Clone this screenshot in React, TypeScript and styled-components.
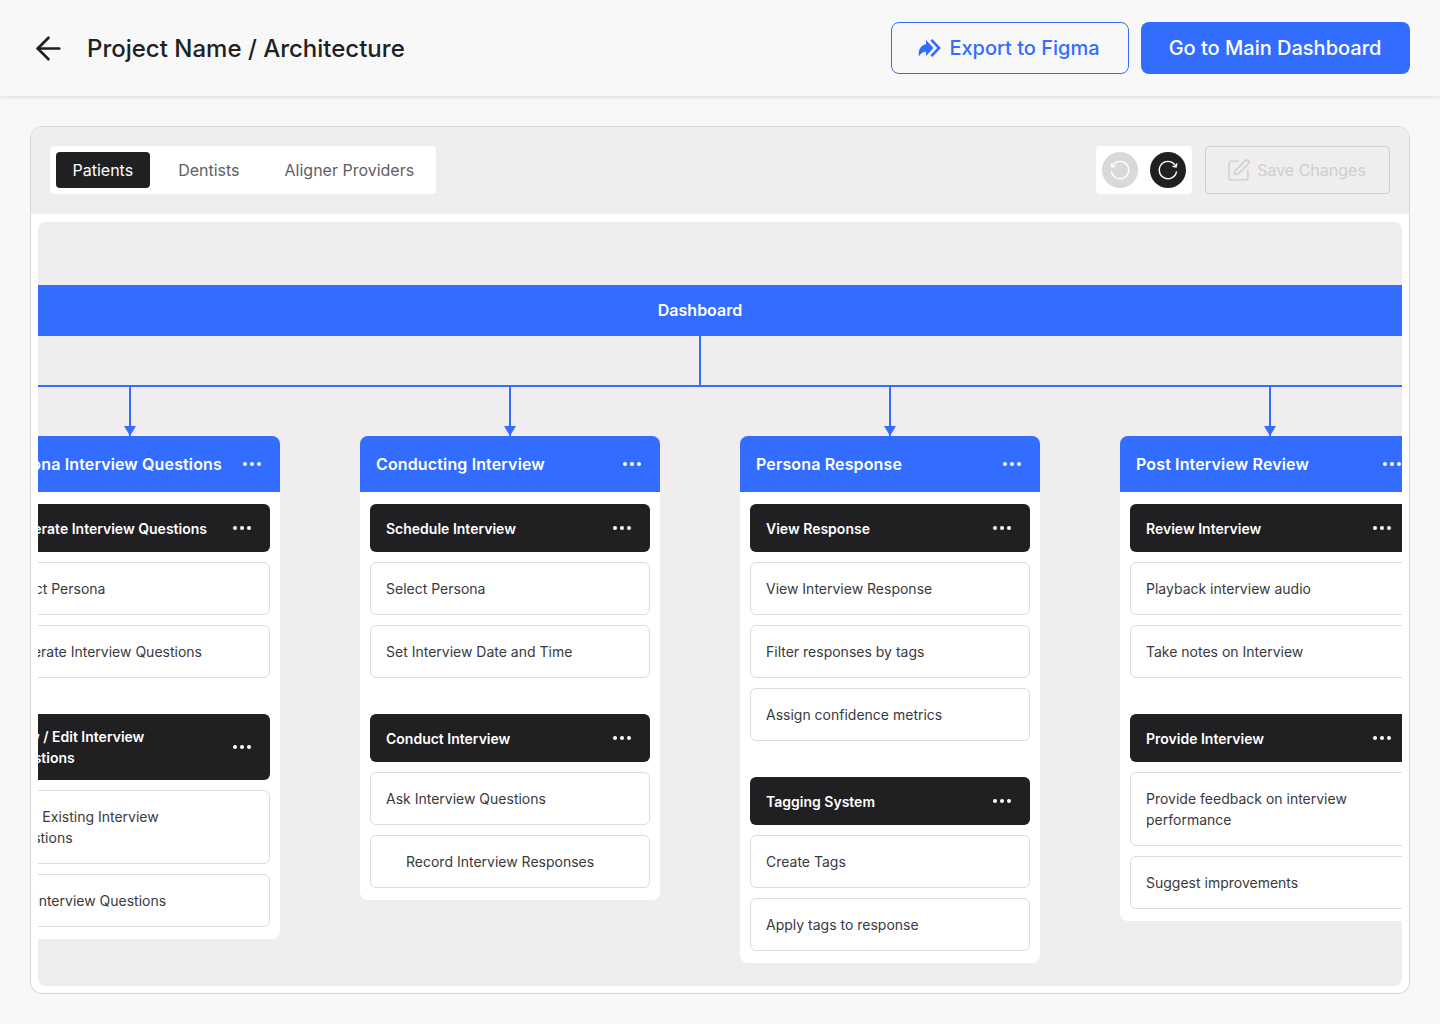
import React from "react";
import styled, { createGlobalStyle } from "styled-components";
import { ArrowLeft, SquarePen } from "lucide-react";

const BLUE = "#336dff";
const INK = "#201f22";
const WASH = "#efedee";

type Section = {
  title: string;
  items: string[];
};

type Module = {
  title: string;
  sections: Section[];
};

const modules: Module[] = [
  {
    title: "Persona Interview Questions",
    sections: [
      {
        title: "Generate Interview Questions",
        items: ["Select Persona", "Generate Interview Questions"],
      },
      {
        title: "View / Edit Interview Questions",
        items: ["View Existing Interview Questions", "Edit Interview Questions"],
      },
    ],
  },
  {
    title: "Conducting Interview",
    sections: [
      {
        title: "Schedule Interview",
        items: ["Select Persona", "Set Interview Date and Time"],
      },
      {
        title: "Conduct Interview",
        items: ["Ask Interview Questions", "Record Interview Responses"],
      },
    ],
  },
  {
    title: "Persona Response",
    sections: [
      {
        title: "View Response",
        items: ["View Interview Response", "Filter responses by tags", "Assign confidence metrics"],
      },
      {
        title: "Tagging System",
        items: ["Create Tags", "Apply tags to response"],
      },
    ],
  },
  {
    title: "Post Interview Review",
    sections: [
      {
        title: "Review Interview",
        items: ["Playback interview audio", "Take notes on Interview"],
      },
      {
        title: "Provide Interview",
        items: ["Provide feedback on interview performance", "Suggest improvements"],
      },
    ],
  },
];

const FigmaExportIcon = () => (
  <svg width="23" height="18" viewBox="0 0 23 18" fill="none">
    <path
      d="M8 .9 15.6 9 8 17v-4.2C4.8 12.8 2.6 14.4.9 17.6-.1 11 2.8 6 8 5.2z"
      fill={BLUE}
    />
    <path d="M13.4.9 21 9l-7.6 8.1" stroke={BLUE} strokeWidth="2.6" />
  </svg>
);

const DotsIcon = () => (
  <svg width="24" height="24" viewBox="0 0 24 24" fill="currentColor">
    <circle cx="5" cy="12" r="2" />
    <circle cx="12" cy="12" r="2" />
    <circle cx="19" cy="12" r="2" />
  </svg>
);

const HistoryIcon: React.FC<{ $undo?: boolean }> = ({ $undo }) => (
  <HistorySvg $undo={$undo} width="26" height="26" viewBox="0 0 24 24" fill="none" stroke="currentColor" strokeWidth="1.3">
    <path d="M19.9 13.3A8 8 0 1 1 19.4 9" />
    <path d="M20.2 5.9 19.5 9.2 16.2 8.5" />
  </HistorySvg>
);

const App: React.FC = () => {
  return (
    <Page>
      <GlobalStyle />
      <Header>
        <TitleGroup>
          <ArrowLeft size={37} color={INK} strokeWidth={1.7} />
          <PageTitle>Project Name / Architecture</PageTitle>
        </TitleGroup>
        <HeaderActions>
          <ExportButton>
            <FigmaExportIcon />
            Export to Figma
          </ExportButton>
          <PrimaryButton>Go to Main Dashboard</PrimaryButton>
        </HeaderActions>
      </Header>

      <Main>
        <Panel>
          <Toolbar>
            <Tabs>
              <Tab $active>Patients</Tab>
              <Tab>Dentists</Tab>
              <Tab>Aligner Providers</Tab>
            </Tabs>
            <ToolbarActions>
              <HistoryBox>
                <HistoryButton>
                  <HistoryIcon $undo />
                </HistoryButton>
                <HistoryButton $active>
                  <HistoryIcon />
                </HistoryButton>
              </HistoryBox>
              <SaveButton>
                <SquarePen size={25} strokeWidth={1.4} />
                Save Changes
              </SaveButton>
            </ToolbarActions>
          </Toolbar>

          <PanelBody>
            <Canvas>
              <Tree>
                <RootNode>Dashboard</RootNode>
                <RootStem />
                <Rail />
                <Columns>
                  {modules.map((module) => (
                    <Column key={module.title}>
                      <Arrow>
                        <ArrowHead />
                      </Arrow>
                      <Card>
                        <CardHeader>
                          <CardTitle>{module.title}</CardTitle>
                          <DotsIcon />
                        </CardHeader>
                        <CardBody>
                          {module.sections.map((section) => (
                            <SectionBlock key={section.title}>
                              <SectionHeader>
                                <SectionTitle>{section.title}</SectionTitle>
                                <DotsIcon />
                              </SectionHeader>
                              {section.items.map((item) => (
                                <Item key={item} $indent={item === "Record Interview Responses"}>
                                  <ItemLabel>{item}</ItemLabel>
                                </Item>
                              ))}
                            </SectionBlock>
                          ))}
                        </CardBody>
                      </Card>
                    </Column>
                  ))}
                </Columns>
              </Tree>
            </Canvas>
          </PanelBody>
        </Panel>
      </Main>
    </Page>
  );
};

export default App;

const GlobalStyle = createGlobalStyle`
  * {
    box-sizing: border-box;
  }

  body {
    margin: 0;
    background: #f8f8f8;
    font-family: Inter, "Liberation Sans", sans-serif;
  }
`;

const Page = styled.div`
  width: 1440px;
  height: 1024px;
  overflow: hidden;
  background: #f8f8f8;
`;

const Header = styled.header`
  height: 96px;
  padding: 0 30px 0 30px;
  display: flex;
  align-items: center;
  justify-content: space-between;
  background: #f8f8f8;
  box-shadow: 0 1px 4px rgba(0, 0, 0, 0.12);
`;

const TitleGroup = styled.div`
  display: flex;
  align-items: center;
  gap: 20px;
`;

const PageTitle = styled.h1`
  margin: 0;
  padding-top: 1px;
  font-size: 24px;
  line-height: 32px;
  font-weight: 500;
  color: ${INK};
`;

const HeaderActions = styled.div`
  display: flex;
  gap: 12px;
`;

const ExportButton = styled.button`
  width: 238px;
  height: 52px;
  padding: 0 2px 0 0;
  display: flex;
  align-items: center;
  justify-content: center;
  gap: 8px;
  border: 1px solid ${BLUE};
  border-radius: 8px;
  background: transparent;
  color: ${BLUE};
  font-family: inherit;
  font-size: 20px;
  font-weight: 500;
`;

const PrimaryButton = styled.button`
  width: 269px;
  height: 52px;
  padding: 0 1px 0 0;
  border: 0;
  border-radius: 8px;
  background: ${BLUE};
  color: #ffffff;
  font-family: inherit;
  font-size: 20px;
  font-weight: 500;
`;

const Main = styled.main`
  padding: 30px 30px 0;
`;

const Panel = styled.section`
  height: 868px;
  border: 1px solid #d6d6d6;
  border-radius: 12px;
  overflow: hidden;
  background: #ffffff;
`;

const Toolbar = styled.div`
  height: 87px;
  padding: 19px 19px 0;
  display: flex;
  align-items: flex-start;
  justify-content: space-between;
  background: ${WASH};
`;

const Tabs = styled.div`
  height: 48px;
  padding: 6px 5px 6px 6px;
  display: flex;
  gap: 12px;
  border-radius: 4px;
  background: #ffffff;
`;

const Tab = styled.div<{ $active?: boolean }>`
  padding: 0 16.5px;
  display: flex;
  align-items: center;
  border-radius: 4px;
  background: ${(p) => (p.$active ? INK : "transparent")};
  color: ${(p) => (p.$active ? "#ffffff" : "#5f5e61")};
  font-size: 16px;
`;

const ToolbarActions = styled.div`
  display: flex;
  gap: 13px;
`;

const HistoryBox = styled.div`
  height: 48px;
  padding: 6px;
  display: flex;
  gap: 12px;
  border-radius: 4px;
  background: #ffffff;
`;

const HistoryButton = styled.div<{ $active?: boolean }>`
  width: 36px;
  height: 36px;
  display: flex;
  align-items: center;
  justify-content: center;
  border-radius: 50%;
  background: ${(p) => (p.$active ? INK : "#d9d9d9")};
  color: #ffffff;
`;

const HistorySvg = styled.svg<{ $undo?: boolean }>`
  transform: ${(p) => (p.$undo ? "scaleX(-1)" : "none")};
`;

const SaveButton = styled.button`
  width: 185px;
  height: 48px;
  padding: 0 3px 0 0;
  display: flex;
  align-items: center;
  justify-content: center;
  gap: 6px;
  border: 1px solid #d0cfd0;
  border-radius: 4px;
  background: transparent;
  color: #cfcecf;
  font-family: inherit;
  font-size: 16px;
`;

const PanelBody = styled.div`
  padding: 8px 7px;
`;

const Canvas = styled.div`
  height: 764px;
  padding-top: 63px;
  overflow: hidden;
  border-radius: 8px;
  background: ${WASH};
`;

const Tree = styled.div`
  width: 1440px;
  margin-left: -58px;
  display: flex;
  flex-direction: column;
  align-items: center;
`;

const RootNode = styled.div`
  width: 100%;
  height: 51px;
  padding-bottom: 1px;
  display: flex;
  align-items: center;
  justify-content: center;
  background: ${BLUE};
  color: #ffffff;
  font-size: 16px;
  font-weight: 600;
`;

const RootStem = styled.div`
  width: 2px;
  height: 49px;
  background: ${BLUE};
`;

const Rail = styled.div`
  width: 100%;
  height: 2px;
  background: ${BLUE};
`;

const Columns = styled.div`
  width: 100%;
  display: flex;
  align-items: flex-start;
  gap: 80px;
`;

const Column = styled.div`
  width: 300px;
  display: flex;
  flex-direction: column;
  align-items: center;
`;

const Arrow = styled.div`
  position: relative;
  width: 2px;
  height: 49px;
  background: ${BLUE};
`;

const ArrowHead = styled.span`
  position: absolute;
  left: -5px;
  bottom: 0;
  border-left: 6px solid transparent;
  border-right: 6px solid transparent;
  border-top: 10px solid ${BLUE};
`;

const Card = styled.div`
  width: 100%;
  overflow: hidden;
  border-radius: 8px;
  background: #ffffff;
`;

const CardHeader = styled.div`
  height: 56px;
  padding: 0 16px;
  display: flex;
  align-items: center;
  justify-content: space-between;
  background: ${BLUE};
  color: #ffffff;
`;

const CardTitle = styled.div`
  font-size: 16px;
  font-weight: 600;
  letter-spacing: 0.14px;
`;

const CardBody = styled.div`
  padding: 12px 10px;
  display: flex;
  flex-direction: column;
  gap: 36px;
`;

const SectionBlock = styled.div`
  display: flex;
  flex-direction: column;
  gap: 10px;
`;

const SectionHeader = styled.div`
  padding: 12px 16px;
  display: flex;
  align-items: center;
  justify-content: space-between;
  border-radius: 6px;
  background: ${INK};
  color: #ffffff;
`;

const SectionTitle = styled.div`
  max-width: 210px;
  font-size: 14px;
  line-height: 21px;
  font-weight: 600;
`;

const Item = styled.div<{ $indent?: boolean }>`
  padding: 15px 15px 15px ${(p) => (p.$indent ? "35px" : "15px")};
  border: 1px solid #dcdcdc;
  border-radius: 6px;
  background: #ffffff;
`;

const ItemLabel = styled.div`
  max-width: 210px;
  color: #3a393c;
  font-size: 14px;
  line-height: 21px;
`;
